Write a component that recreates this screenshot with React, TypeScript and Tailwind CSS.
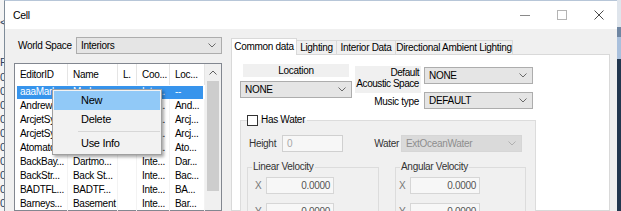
import clsx from "clsx";

type ComboProps = { className?: string; text: string; disabled?: boolean };

function Chevron({ color = "#606060" }: { color?: string }) {
  return (
    <svg width="8" height="5" viewBox="0 0 8 5" className="shrink-0">
      <path d="M0.5 0.5 L4 4 L7.5 0.5" fill="none" stroke={color} strokeWidth="1" />
    </svg>
  );
}

function Combo({ className, text, disabled }: ComboProps) {
  return (
    <div
      className={clsx(
        "flex h-[17px] items-center justify-between border pl-[4px] pr-[5px] leading-[15px]",
        disabled ? "border-[#d6d6d6] bg-[#dadada] text-[#8e8e8e]" : "border-[#adadad] bg-[#e5e5e5] text-black",
        className,
      )}
    >
      <span className="whitespace-nowrap">{text}</span>
      <Chevron color={disabled ? "#b0b0b0" : "#6a6a6a"} />
    </div>
  );
}

const columns = [
  { title: "EditorID", w: "w-[53px]" },
  { title: "Name", w: "w-[50px]" },
  { title: "L.", w: "w-[19px]" },
  { title: "Coo...", w: "w-[33px]" },
  { title: "Loc...", w: "w-[35px]" },
];

const rows = [
  ["aaaMark...", "Marker...", "", "Inte...", "--"],
  ["Andrew...", "Andrew...", "", "Inte...", "And..."],
  ["ArcjetSy...", "Arcjet...", "", "Inte...", "Arcj..."],
  ["ArcjetSy...", "Arcjet...", "", "Inte...", "Arcj..."],
  ["Atomato...", "Atomat...", "", "Inte...", "Ato..."],
  ["BackBay...", "Dartmo...", "", "Inte...", "Dar..."],
  ["BackStr...", "Back St...", "", "Inte...", "Bac..."],
  ["BADTFL...", "BADTF...", "", "Inte...", "BA..."],
  ["Barneys...", "Basement", "", "Inte...", "Bar..."],
];

function RecordList() {
  return (
    <div className="relative mt-[9px] flex min-h-0 flex-1 border border-[#828790] bg-white">
      <div className="w-[190px]">
        <div className="flex h-[21px]">
          {columns.map((c) => (
            <div key={c.title} className={clsx("border-r border-[#e5e5e5] pl-[5px] leading-[21px]", c.w)}>
              {c.title}
            </div>
          ))}
        </div>
        {rows.map((r, i) => (
          <div
            key={i}
            className={clsx(
              "flex h-[14px]",
              i === 0 &&
                "bg-[linear-gradient(#3794ec,#3794ec)] bg-[length:186px_13px] bg-[position:2px_1px] bg-no-repeat text-white",
            )}
          >
            {r.map((cell, j) => (
              <div
                key={j}
                className={clsx(
                  "overflow-hidden whitespace-nowrap pl-[5px] leading-[14px]",
                  columns[j].w,
                  i !== 0 && "border-r border-[#f3f3f3]",
                )}
              >
                {cell}
              </div>
            ))}
          </div>
        ))}
      </div>
      <div className="flex w-[16px] flex-col items-center bg-[#f0f0f0]">
        <div className="flex h-[17px] items-center justify-center">
          <svg width="8" height="5" viewBox="0 0 8 5">
            <path d="M0.5 4.5 L4 1 L7.5 4.5" fill="none" stroke="#606060" strokeWidth="1" />
          </svg>
        </div>
        <div className="h-[110px] w-[12px] bg-[#cdcdcd]" />
      </div>

      {/* context menu */}
      <div className="absolute left-[37px] top-[25px] flex h-[66px] w-[110px] flex-col border border-[#a0a0a0] bg-[#f2f2f2] p-[1px] text-[11px] shadow-[2px_2px_3px_rgba(0,0,0,0.35)]">
        <div className="flex h-[19px] items-center bg-[#91c9f7] pl-[27px]">New</div>
        <div className="flex h-[19px] items-center pl-[27px]">Delete</div>
        <div className="flex h-[6px] items-center pl-[24px]">
          <div className="h-px w-full bg-[#d7d7d7]" />
        </div>
        <div className="flex h-[19px] items-center pl-[27px]">Use Info</div>
      </div>
    </div>
  );
}

function VelocityBox({ title, w, labelW, inputW }: { title: string; w: string; labelW: string; inputW: string }) {
  return (
    <fieldset className={clsx("border border-[#dcdcdc]", w)}>
      <legend className="ml-[4px] px-[1px] leading-[12px] text-[#333]">{title}</legend>
      {["X", "Y"].map((axis, i) => (
        <div key={axis} className={clsx("flex items-center", i === 0 ? "mt-[4px]" : "mt-[9px]")}>
          <div className={clsx("text-[#777]", labelW)}>{axis}</div>
          <div
            className={clsx(
              "h-[17px] border border-[#d6d6d6] bg-[#f7f7f7] pr-[3px] text-right leading-[15px] text-[#555]",
              inputW,
            )}
          >
            0.0000
          </div>
        </div>
      ))}
    </fieldset>
  );
}

function CommonData() {
  return (
    <div className="min-h-0 flex-1 border border-[#d9d9d9] bg-white pl-[8px] pt-[9px]">
      <div className="flex items-start">
        <div className="w-[112px]">
          <div className="mx-[3px] h-[13px] bg-[#f0f0f0] text-center leading-[13px]">Location</div>
          <Combo className="mt-[4px]" text="NONE" />
        </div>
        <div className="ml-[3px] w-[66px]">
          <div className="mt-[2px] flex h-[27px] flex-col items-end whitespace-nowrap bg-[#f0f0f0] pr-[2px] pt-[1px] leading-[11px] tracking-[-0.45px]">
            <span>Default</span>
            <span>Acoustic Space</span>
          </div>
          <div className="mt-[3px] whitespace-nowrap pr-[2px] text-right leading-[12px]">Music type</div>
        </div>
        <div className="ml-[3px] w-[109px]">
          <Combo className="mt-[3px]" text="NONE" />
          <Combo className="mt-[8px]" text="DEFAULT" />
        </div>
      </div>

      <fieldset className="mt-[5px] w-[296px] border border-[#dcdcdc] bg-[#f0f0f0] pb-[20px]">
        <legend className="ml-[6px] pr-[2px] leading-[12px]">
          <span className="flex items-center gap-[3px]">
            <span className="h-[11px] w-[11px] border border-[#333] bg-white" />
            Has Water
          </span>
        </legend>
        <div className="mt-[8px] flex h-[18px] items-center">
          <div className="w-[41px] pl-[8px] text-[#333]">Height</div>
          <div className="h-[17px] w-[61px] border border-[#d0d0d0] bg-[#f7f7f7] pl-[4px] leading-[15px] text-[#a8a8a8]">
            0
          </div>
          <div className="w-[58px] pr-[2px] text-right text-[#333]">Water</div>
          <Combo className="w-[121px]" text="ExtOceanWater" disabled />
        </div>
        <div className="ml-[6px] mt-[9px] flex gap-[16px]">
          <VelocityBox title="Linear Velocity" w="w-[132px]" labelW="w-[18px] pl-[7px]" inputW="w-[68px]" />
          <VelocityBox title="Angular Velocity" w="w-[131px]" labelW="w-[14px] pl-[3px]" inputW="w-[70px]" />
        </div>
      </fieldset>
    </div>
  );
}

function RightPane() {
  return (
    <div className="ml-[9px] flex w-[379px] flex-col pt-[9px]">
      <div className="relative z-10 flex h-[16px] items-start whitespace-nowrap">
        <div className="h-[17px] w-[66px] border border-b-0 border-[#d9d9d9] bg-white text-center leading-[15px]">
          Common data
        </div>
        <div className="mt-[2px] h-[14px] w-[40px] border-r border-t border-[#d9d9d9] text-center leading-[13px]">
          Lighting
        </div>
        <div className="mt-[2px] h-[14px] w-[59px] border-r border-t border-[#d9d9d9] text-center leading-[13px]">
          Interior Data
        </div>
        <div className="mt-[2px] h-[14px] w-[117px] border-r border-t border-[#d9d9d9] text-center leading-[13px]">
          Directional Ambient Lighting
        </div>
      </div>
      <CommonData />
    </div>
  );
}

export default function App() {
  const behind = ["0", "0", "0", "0", "0", "0", "0", "0", "0", "0"];
  return (
    <div className="flex h-[211px] w-[621px] overflow-hidden bg-[#f0f0f0] font-[family-name:'Liberation_Sans',Arial,sans-serif] text-[10px] leading-[13px] tracking-[-0.3px] text-black">
      {/* window behind, left edge */}
      <div className="flex w-[4px] flex-col overflow-hidden bg-[#f4f4f4] text-[11px] text-[#2b3f5e]">
        <div className="mt-[16px] h-[13px] whitespace-nowrap">&lt;</div>
        <div className="mt-[27px] h-[14px] whitespace-nowrap">Fo</div>
        {behind.map((c, i) => (
          <div key={i} className="h-[14px] whitespace-nowrap leading-[14px]">
            {c}
          </div>
        ))}
      </div>

      <div className="flex w-[613px] flex-col border-l border-t border-[#7f8c99] border-t-[#b7c6d8]">
        <div className="flex h-[28px] shrink-0 items-center bg-white pl-[8px]">
          <span className="text-[10.5px]">Cell</span>
          <div className="ml-auto flex h-full">
            <div className="flex w-[37px] items-center justify-center">
              <svg width="10" height="10" viewBox="0 0 10 10">
                <path d="M0 5.5 H10" stroke="#8a8a8a" strokeWidth="1" />
              </svg>
            </div>
            <div className="flex w-[37px] items-center justify-center">
              <svg width="10" height="10" viewBox="0 0 10 10">
                <rect x="0.5" y="0.5" width="9" height="9" fill="none" stroke="#b4b4b4" strokeWidth="1" />
              </svg>
            </div>
            <div className="flex w-[37px] items-center justify-center">
              <svg width="10" height="10" viewBox="0 0 10 10">
                <path d="M0.5 0.5 L9.5 9.5 M9.5 0.5 L0.5 9.5" stroke="#4a4a4a" strokeWidth="1" />
              </svg>
            </div>
          </div>
        </div>

        <div className="flex min-h-0 flex-1">
          <div className="ml-[9px] flex w-[208px] flex-col pt-[8px]">
            <div className="flex h-[17px] items-center">
              <div className="w-[62px] whitespace-nowrap pl-[4px]">World Space</div>
              <Combo className="w-[146px]" text="Interiors" />
            </div>
            <RecordList />
          </div>
          <RightPane />
        </div>
      </div>

      <div className="flex w-[4px] flex-col bg-[#22374f]">
        <div className="h-[27px] bg-[#dfe5ec]" />
        <div className="h-[10px] bg-[#6f86a2]" />
        <div className="h-[22px] bg-[#a9c0dc]" />
      </div>
    </div>
  );
}
